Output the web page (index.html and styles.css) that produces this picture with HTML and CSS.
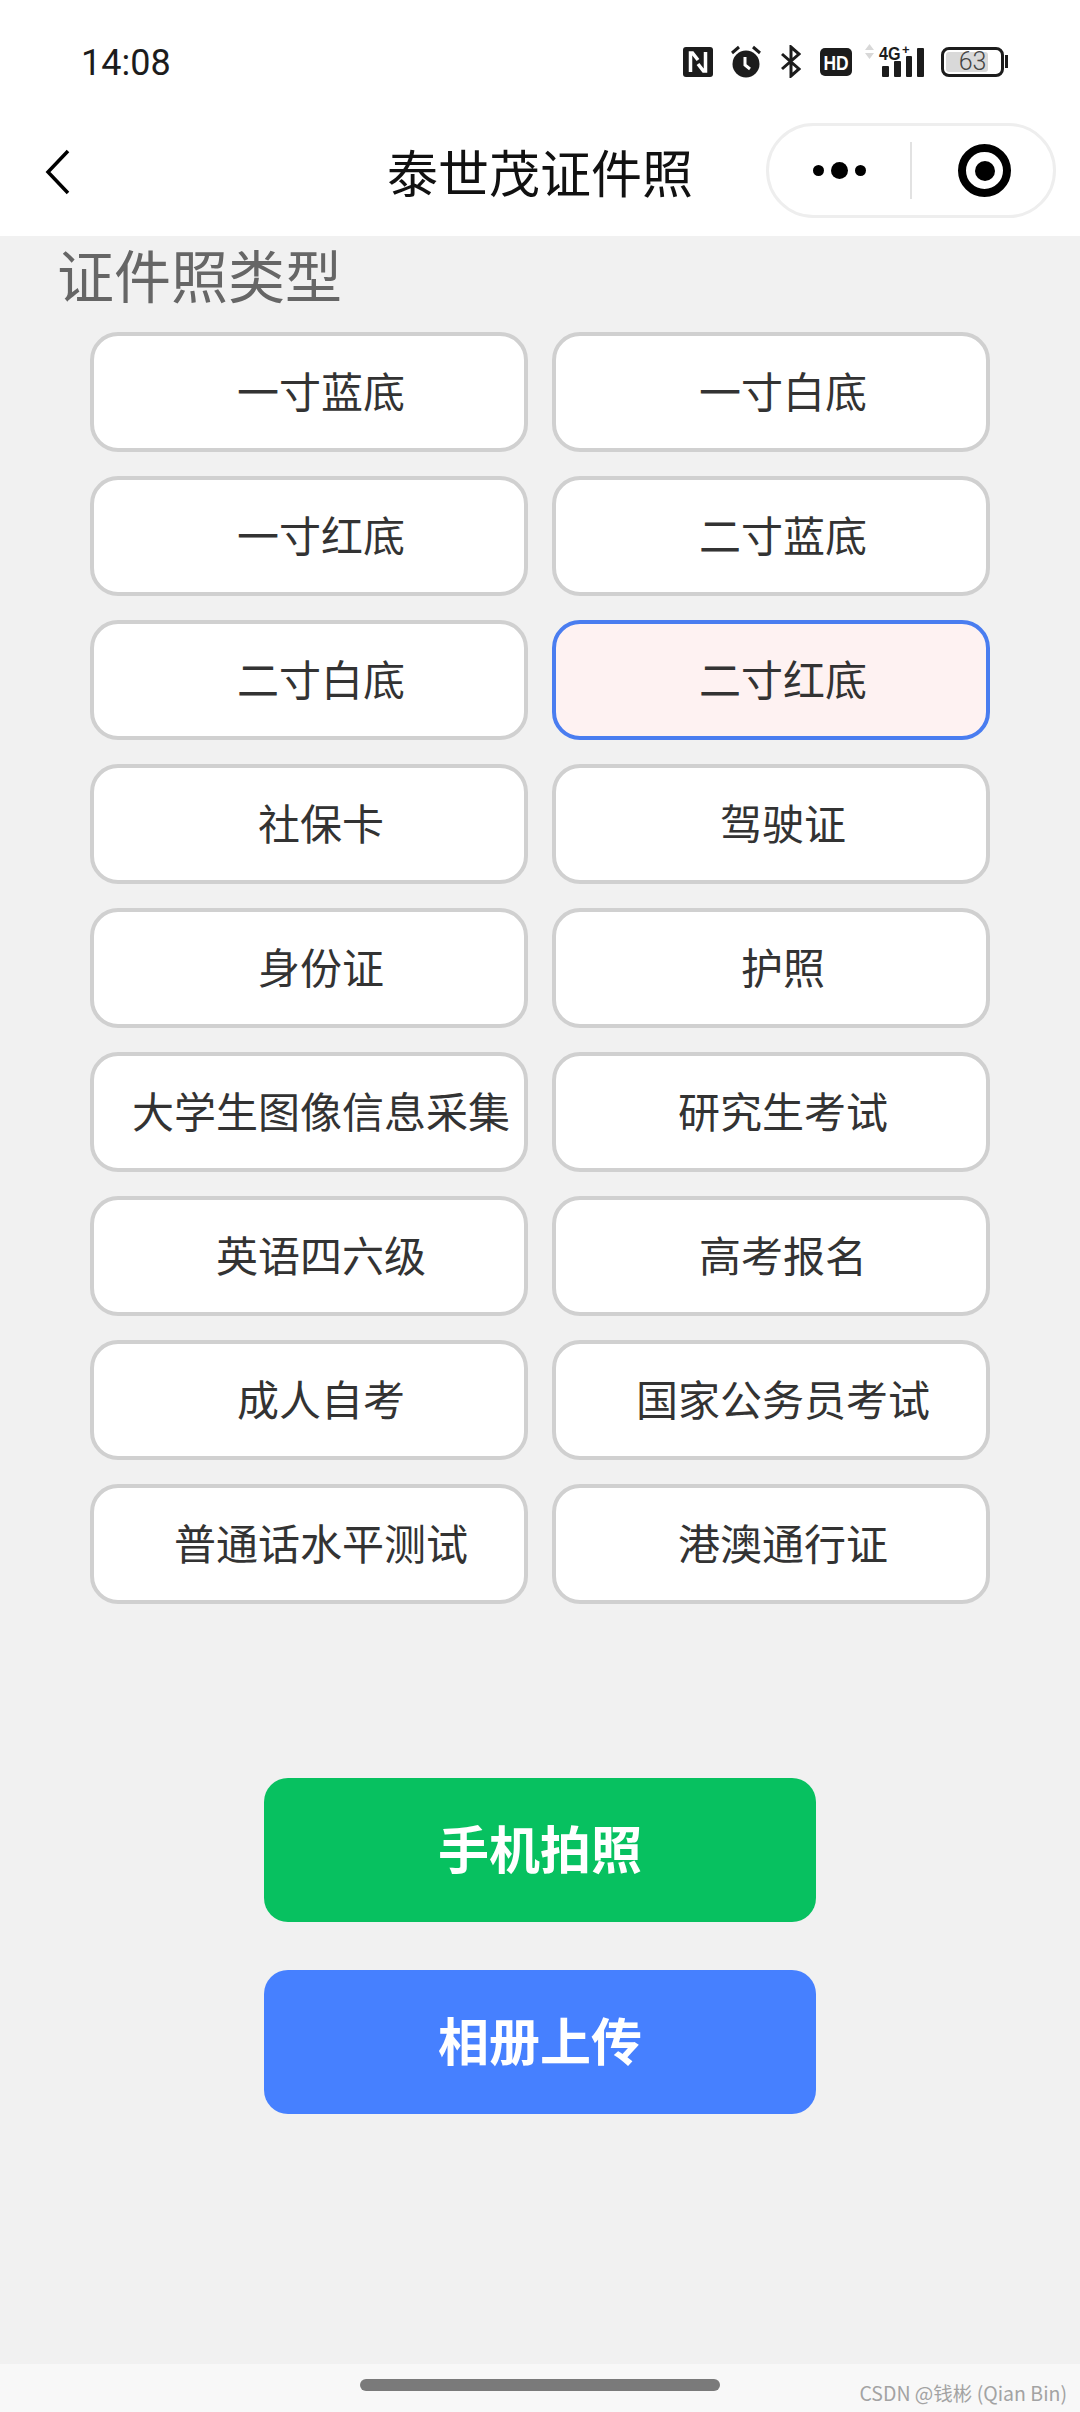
FILE: index.html
```html
<!DOCTYPE html>
<html lang="zh-CN">
<head>
  <meta charset="UTF-8">
  <meta name="viewport" content="width=device-width, initial-scale=1.0">
  <title>泰世茂证件照</title>
  <link rel="stylesheet" href="styles.css">
</head>
<body>
  <div class="status-bar">
    <span class="time">14:08</span>
    <div class="status-icons">
      <svg class="icon-nfc" width="30" height="30" viewBox="0 0 30 30">
        <rect width="30" height="30" rx="3" fill="#1c1c1c"/>
        <path d="M7.500 25V6h2L15 13M22.500 5v19h-2L15 17" fill="none" stroke="#fff" stroke-width="3.500"/>
      </svg>
      <svg class="icon-alarm" width="30" height="33" viewBox="0 0 30 33">
        <circle cx="15" cy="19" r="13.500" fill="#1c1c1c"/>
        <path d="M1 8l7-6M29 8l-7-6" stroke="#1c1c1c" stroke-width="3" fill="none"/>
        <path d="M14 12v8l5 4" stroke="#fff" stroke-width="3" fill="none"/>
      </svg>
      <svg class="icon-bt" width="21" height="33" viewBox="0 0 21 33">
        <path d="M2 9l17 15-8 7V2l8 7L2 24" fill="none" stroke="#1c1c1c" stroke-width="3"/>
      </svg>
      <svg class="icon-hd" width="32" height="28" viewBox="0 0 32 28">
        <rect width="32" height="28" rx="5" fill="#1c1c1c"/>
        <text transform="translate(3.500 21.500) scale(0.83 1)" class="hd-text">HD</text>
      </svg>
      <svg class="icon-signal" width="60" height="37" viewBox="0 -4 60 37">
        <path d="M0 5l4.500-6L9 5zM0 8h9l-4.500 6z" fill="#d8d8d8"/>
        <rect x="17" y="21" width="7" height="11" rx="1" fill="#1c1c1c"/>
        <rect x="29" y="16" width="7" height="16" rx="1" fill="#1c1c1c"/>
        <rect x="41" y="11" width="6" height="21" rx="1" fill="#1c1c1c"/>
        <rect x="52" y="3" width="7" height="29" rx="1" fill="#1c1c1c"/>
        <text transform="translate(14 14.500) scale(0.85 1)" class="signal-text">4G</text>
        <text x="37" y="9" class="signal-plus">+</text>
      </svg>
      <div class="battery">
        <div class="battery-body">
          <div class="battery-level"></div>
          <span class="battery-text">63</span>
        </div>
        <div class="battery-nub"></div>
      </div>
    </div>
  </div>

  <div class="nav-bar">
    <svg class="back" width="26" height="46" viewBox="0 0 26 46">
      <path d="M23 2L3 23l20 21" fill="none" stroke="#000" stroke-width="3.500"/>
    </svg>
    <div class="nav-title">泰世茂证件照</div>
    <div class="capsule">
      <div class="capsule-left">
        <span class="dot"></span><span class="dot dot-big"></span><span class="dot"></span>
      </div>
      <div class="capsule-line"></div>
      <div class="capsule-right">
        <span class="target"><span class="target-in"></span></span>
      </div>
    </div>
  </div>

  <div class="main">
    <div class="section-title">证件照类型</div>
    <div class="type-grid">
      <div class="type-item">一寸蓝底</div>
      <div class="type-item">一寸白底</div>
      <div class="type-item">一寸红底</div>
      <div class="type-item">二寸蓝底</div>
      <div class="type-item">二寸白底</div>
      <div class="type-item active">二寸红底</div>
      <div class="type-item">社保卡</div>
      <div class="type-item">驾驶证</div>
      <div class="type-item">身份证</div>
      <div class="type-item">护照</div>
      <div class="type-item">大学生图像信息采集</div>
      <div class="type-item">研究生考试</div>
      <div class="type-item">英语四六级</div>
      <div class="type-item">高考报名</div>
      <div class="type-item">成人自考</div>
      <div class="type-item">国家公务员考试</div>
      <div class="type-item">普通话水平测试</div>
      <div class="type-item">港澳通行证</div>
    </div>
    <div class="actions">
      <button class="action-btn green">手机拍照</button>
      <button class="action-btn blue">相册上传</button>
    </div>
  </div>

  <div class="home-bar">
    <div class="home-pill"></div>
    <span class="watermark">CSDN @钱彬 (Qian Bin)</span>
  </div>
</body>
</html>
```

FILE: styles.css
```css
* {
  box-sizing: border-box;
}
body {
  font-family: "Noto Sans CJK SC", "Noto Sans", sans-serif;
  background-color: #f1f1f1;
  margin: 0;
  width: 1080px;
  height: 2412px;
  display: flex;
  flex-direction: column;
  overflow: hidden;
}

/* status bar */
.status-bar {
  height: 118px;
  background-color: #fff;
  display: flex;
  justify-content: space-between;
  align-items: flex-start;
  padding: 45px 72px 0 81px;
}
.time {
  font-family: Roboto, sans-serif;
  font-size: 36px;
  line-height: 36px;
  color: #1c1c1c;
}
.status-icons {
  display: flex;
  align-items: center;
  height: 33px;
}
.icon-alarm {
  margin-left: 18px;
}
.icon-bt {
  margin-left: 19px;
}
.icon-hd {
  margin-left: 19px;
}
.hd-text {
  font-family: "Liberation Sans", sans-serif;
  font-size: 21px;
  font-weight: bold;
  fill: #fff;
}
.icon-signal {
  margin: -4px 0 0 13px;
}
.signal-text {
  font-family: "Liberation Sans", sans-serif;
  font-size: 19px;
  font-weight: bold;
  fill: #1c1c1c;
}
.signal-plus {
  font-family: "Liberation Sans", sans-serif;
  font-size: 13px;
  font-weight: bold;
  fill: #1c1c1c;
}
.battery {
  display: flex;
  align-items: center;
  margin-left: 16px;
}
.battery-body {
  position: relative;
  width: 63px;
  height: 30px;
  border: 3px solid #1c1c1c;
  border-radius: 8px;
  padding: 2px;
}
.battery-level {
  width: 80%;
  height: 100%;
  background-color: #d9d9d9;
  border-radius: 3px;
}
.battery-text {
  position: absolute;
  left: 0;
  right: 0;
  top: 0;
  font-family: Roboto, sans-serif;
  font-size: 25px;
  font-weight: 300;
  line-height: 24px;
  text-align: center;
  color: #444;
}
.battery-nub {
  width: 3px;
  height: 13px;
  margin-left: 1px;
  background-color: #1c1c1c;
}

/* nav bar */
.nav-bar {
  height: 118px;
  background-color: #fff;
  display: grid;
  grid-template-columns: 1fr auto 1fr;
  align-items: center;
  padding: 0 24px 0 45px;
}
.back {
  margin-top: -10px;
}
.nav-title {
  font-size: 51px;
  line-height: 60px;
  color: #111;
  margin: -12px 0 0 -21px;
}
.capsule {
  justify-self: end;
  width: 290px;
  height: 95px;
  margin-top: -13px;
  background-color: #fff;
  border: 3px solid #eeeeee;
  border-radius: 48px;
  display: flex;
  align-items: center;
}
.capsule-left {
  width: 141px;
  display: flex;
  justify-content: center;
  align-items: center;
  gap: 7px;
}
.dot {
  width: 11px;
  height: 11px;
  border-radius: 50%;
  background-color: #000;
}
.dot-big {
  width: 17px;
  height: 17px;
}
.capsule-line {
  width: 2px;
  height: 57px;
  background-color: #e2e2e2;
}
.capsule-right {
  flex: 1;
  display: flex;
  justify-content: center;
  padding-left: 4px;
}
.target {
  width: 53px;
  height: 53px;
  border: 8px solid #000;
  border-radius: 50%;
  display: flex;
  align-items: center;
  justify-content: center;
}
.target-in {
  width: 20px;
  height: 20px;
  border-radius: 50%;
  background-color: #000;
}

/* main */
.main {
  flex: 1;
  padding: 0 90px;
}
.section-title {
  font-size: 57px;
  line-height: 64px;
  color: #666;
  margin: 0 0 0 -33px;
  padding-top: 5px;
  height: 96px;
}
.type-grid {
  display: grid;
  grid-template-columns: 438px 438px;
  grid-auto-rows: 120px;
  column-gap: 24px;
  row-gap: 24px;
}
.type-item {
  background-color: #fff;
  border: 4px solid #d0d0d0;
  border-radius: 28px;
  font-size: 42px;
  color: #333;
  padding: 0 0 6px 24px;
  display: flex;
  align-items: center;
  justify-content: center;
  white-space: nowrap;
}
.type-item.active {
  background-color: #fef2f2;
  border-color: #4a7df0;
}
.actions {
  margin-top: 174px;
  display: flex;
  flex-direction: column;
  align-items: center;
  gap: 48px;
}
.action-btn {
  width: 552px;
  height: 144px;
  border: none;
  border-radius: 24px;
  padding: 0 0 7px;
  color: #fff;
  font-family: inherit;
  font-size: 51px;
  font-weight: bold;
}
.green {
  background-color: #07c160;
}
.blue {
  background-color: #4680ff;
}

/* home indicator */
.home-bar {
  position: relative;
  height: 48px;
  background-color: #f8f8f8;
  display: flex;
  justify-content: center;
  padding-top: 15px;
}
.home-pill {
  width: 360px;
  height: 12px;
  border-radius: 6px;
  background-color: #7a7a7a;
}
.watermark {
  position: absolute;
  right: 13px;
  top: 15px;
  font-size: 19.500px;
  line-height: 28px;
  color: #a3a3a3;
}
```
